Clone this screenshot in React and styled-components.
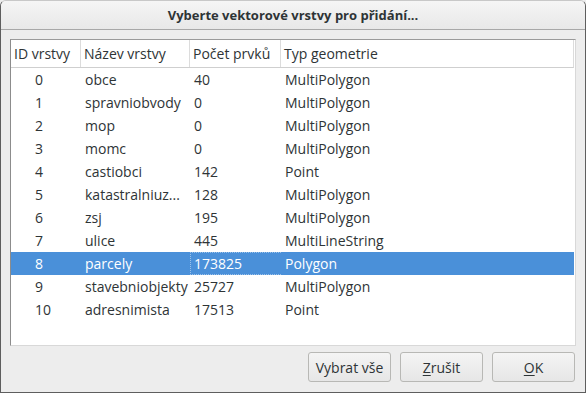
import React from "react";
import styled, { createGlobalStyle } from "styled-components";

const GlobalStyle = createGlobalStyle`
  html, body { margin: 0; padding: 0; background: #ededed; }
  * { box-sizing: border-box; }
  body { font-family: "Open Sans", "Noto Sans", sans-serif; }
`;

const layers = [
  { id: 0, name: "obce", count: "40", type: "MultiPolygon" },
  { id: 1, name: "spravniobvody", count: "0", type: "MultiPolygon" },
  { id: 2, name: "mop", count: "0", type: "MultiPolygon" },
  { id: 3, name: "momc", count: "0", type: "MultiPolygon" },
  { id: 4, name: "castiobci", count: "142", type: "Point" },
  { id: 5, name: "katastralniuz...", count: "128", type: "MultiPolygon" },
  { id: 6, name: "zsj", count: "195", type: "MultiPolygon" },
  { id: 7, name: "ulice", count: "445", type: "MultiLineString" },
  { id: 8, name: "parcely", count: "173825", type: "Polygon" },
  { id: 9, name: "stavebniobjekty", count: "25727", type: "MultiPolygon" },
  { id: 10, name: "adresnimista", count: "17513", type: "Point" },
];

function App() {
  const selected = 8;
  return (
    <>
      <GlobalStyle />
      <Window>
        <TitleBar>Vyberte vektorové vrstvy pro přidání...</TitleBar>
        <Body>
          <TablePanel>
            <HeaderRow>
              <HeadCell>ID vrstvy</HeadCell>
              <HeadCell>Název vrstvy</HeadCell>
              <HeadCell>Počet prvků</HeadCell>
              <HeadCell>Typ geometrie</HeadCell>
            </HeaderRow>
            {layers.map((l) => (
              <Row key={l.id} $selected={l.id === selected}>
                <Cell $indent>{l.id}</Cell>
                <Cell>{l.name}</Cell>
                <Cell $focus={l.id === selected}>{l.count}</Cell>
                <Cell>{l.type}</Cell>
              </Row>
            ))}
          </TablePanel>
          <Footer>
            <Button>Vybrat vše</Button>
            <Button>
              <u>Z</u>rušit
            </Button>
            <Button>
              <u>O</u>K
            </Button>
          </Footer>
        </Body>
      </Window>
    </>
  );
}

export default App;

const Window = styled.div`
  width: 586px;
  height: 393px;
  border: 1px solid #5e5e5e;
  border-top-color: #c8c8c8;
  border-radius: 6px 6px 0 0;
  background: #ededed;
  display: flex;
  flex-direction: column;
  overflow: hidden;
  color: #2e3436;
  font-size: 14px;
`;

const TitleBar = styled.div`
  height: 29px;
  flex: none;
  display: flex;
  align-items: center;
  justify-content: center;
  font-weight: 700;
  font-size: 13px;
  color: #2e3436;
  background: linear-gradient(#f5f5f5, #e8e8e8);
  border-bottom: 1px solid #a8a8a8;
`;

const Body = styled.div`
  flex: 1;
  display: flex;
  flex-direction: column;
  padding: 9px;
`;

const TablePanel = styled.div`
  height: 307px;
  background: #fff;
  border: 1px solid #d8d8d8;
  border-left-color: #8c8c8c;
  border-top-color: #9a9a9a;
`;

const cols = `70px 109px 91px 1fr`;

const HeaderRow = styled.div`
  display: grid;
  grid-template-columns: ${cols};
  height: 28px;
  margin-right: 1px;
  border-bottom: 1px solid #cfcfcf;
  border-right: 1px solid #dcdcdc;
`;

const HeadCell = styled.div`
  display: flex;
  align-items: center;
  padding-left: 3px;
  border-right: 1px solid #dcdcdc;
  &:last-child { border-right: none; }
`;

const Row = styled.div`
  display: grid;
  grid-template-columns: ${cols};
  height: 23px;
  margin-right: 1px;
  background: ${(p) => (p.$selected ? "#4a90d9" : "transparent")};
  color: ${(p) => (p.$selected ? "#ffffff" : "#2e3436")};
`;

const Cell = styled.div`
  display: flex;
  align-items: center;
  padding-left: ${(p) => (p.$indent ? "24px" : "3px")};
  white-space: nowrap;
  overflow: hidden;
  border: 1px dotted ${(p) => (p.$focus ? "rgba(255,255,255,0.45)" : "transparent")};
  border-left-width: ${(p) => (p.$indent ? "0" : "1px")};
  border-right-width: 0;
`;

const Footer = styled.div`
  display: flex;
  justify-content: flex-end;
  gap: 9px;
  margin-top: 6px;
  padding-right: 1px;
`;

const Button = styled.button`
  width: 83px;
  height: 30px;
  font-family: inherit;
  font-size: 14px;
  color: #2e3436;
  background: linear-gradient(#f4f4f4, #e6e6e6);
  border: 1px solid #b8b8b5;
  border-radius: 3px;
  u { text-decoration-thickness: 1px; text-underline-offset: 2px; }
`;
